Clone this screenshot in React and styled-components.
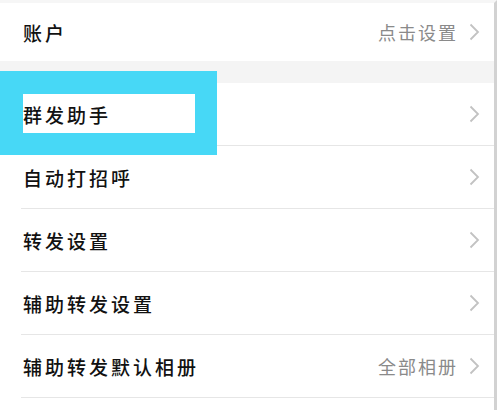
import React from 'react';
import styled, { createGlobalStyle } from 'styled-components';

const GlobalStyle = createGlobalStyle`
    html, body {
        margin: 0;
        padding: 0;
        background: #ffffff;
    }
    body {
        font-family: "Noto Sans CJK SC", "Noto Sans", sans-serif;
    }
`

const Screen = styled.div`
    width: 494px;
    height: 407px;
    overflow: hidden;
    background: #ffffff;
    border-right: 3px solid #d2d2d2;
    border-top: 3px solid #f6f6f6;
`

const Group = styled.div`
    display: flex;
    flex-direction: column;
    background: #ffffff;
`

const Gap = styled.div`
    height: 22px;
    background: #f4f4f4;
`

const Row = styled.div`
    position: relative;
    display: flex;
    align-items: center;
    height: ${props => props.$height || 62}px;
    padding: 0 14px 0 23px;
`

const Divider = styled.div`
    height: 1px;
    margin-left: 21px;
    background: #e6e6e6;
`

const Label = styled.span`
    position: relative;
    z-index: 1;
    flex: 1;
    font-size: 19px;
    letter-spacing: 3px;
    color: #111111;
    font-weight: 500;
`

const Value = styled.span`
    font-size: 18px;
    letter-spacing: 2px;
    color: #8a8a8a;
    margin-right: 11px;
`

const Highlight = styled.div`
    position: absolute;
    left: 0;
    top: -12px;
    width: 217px;
    height: 84px;
    background: #47d8f6;
    display: flex;
    align-items: flex-start;
    padding: 23px 0 0 23px;
    box-sizing: border-box;
`

const HighlightCard = styled.div`
    width: 172px;
    height: 39px;
    background: #ffffff;
`

const Chevron = () => (
    <svg width="11" height="18" viewBox="0 0 11 18">
        <polyline points="1.5,1.5 9,9 1.5,16.5" fill="none" stroke="#c2c2c2" strokeWidth="1.8" />
    </svg>
)

const items = [
    { label: '群发助手', highlight: true },
    { label: '自动打招呼' },
    { label: '转发设置' },
    { label: '辅助转发设置' },
    { label: '辅助转发默认相册', value: '全部相册' },
]

const App = () => (
    <>
        <GlobalStyle />
        <Screen>
            <Group>
                <Row $height={58}>
                    <Label>账户</Label>
                    <Value>点击设置</Value>
                    <Chevron />
                </Row>
            </Group>
            <Gap />
            <Group>
                {items.map(item => (
                    <React.Fragment key={item.label}>
                        <Row>
                            {item.highlight && (
                                <Highlight>
                                    <HighlightCard />
                                </Highlight>
                            )}
                            <Label>{item.label}</Label>
                            {item.value && <Value>{item.value}</Value>}
                            <Chevron />
                        </Row>
                        <Divider />
                    </React.Fragment>
                ))}
            </Group>
        </Screen>
    </>
)

export default App;
